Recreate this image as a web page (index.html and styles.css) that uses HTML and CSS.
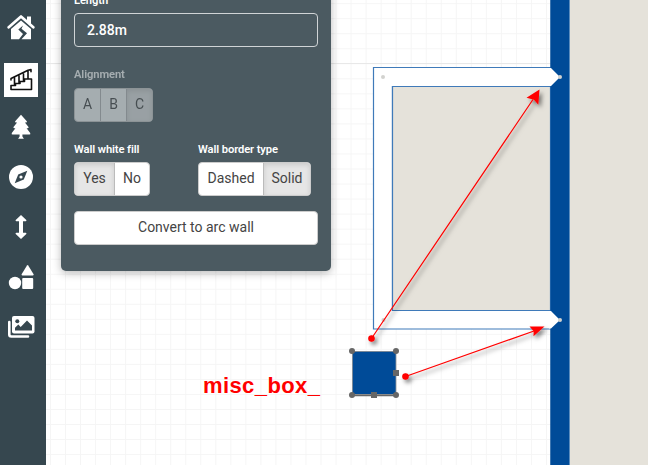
FILE: index.html
```html
<!DOCTYPE html>
<html lang="en">
<head>
<meta charset="utf-8">
<title>Floor plan editor</title>
<link rel="stylesheet" href="styles.css">
</head>
<body>
<div class="app">
  <nav class="toolbar">
    <a class="tool"><svg width="28" height="26" viewBox="0 0 28 26"><path d="M20 2.500h4v9l-4-3.500z" fill="#fff"/><path d="M1.700 13.300 14 2.500 26.300 13.300" fill="none" stroke="#fff" stroke-width="2.700" stroke-linecap="round" stroke-linejoin="round"/><path d="M14 6.400 24 15V25.300H14.500l5.500-6-5.500-4.600 1.500-3.300-4.700 4.200 4.700 4.500-4 5.200H4V15z" fill="#fff"/></svg></a>
    <a class="tool active"><svg width="34" height="34" viewBox="0 0 34 34"><path d="M7 26.500V22.500h4.500V20.500h4.500V18.500h4.500V16H27.500v10.500zM7 15.500 24 7.300l3-.7v2.200M10.500 14.500V22M15 12.500v7M19.500 10.500v7M24 8v7.500M7 15.500v1.500" fill="none" stroke="#111" stroke-width="1.600" stroke-linejoin="round" stroke-linecap="round"/></svg></a>
    <a class="tool"><svg width="20" height="26" viewBox="0 0 20 26"><path d="M10 .8 15.800 7.300q.6 1-.6 1.200h-1.300l3.600 4.500q.5 1.100-.7 1.200h-1.200l3.600 4.800q.6 1.500-.8 1.600h-7v2l1.500 2.200H7.100l1.500-2.200v-2h-7q-1.400-.1-.8-1.600L4.400 14.200H3.200q-1.200-.1-.7-1.200l3.600-4.500H4.800q-1.200-.2-.6-1.200z" fill="#fff"/></svg></a>
    <a class="tool"><svg width="26" height="26" viewBox="0 0 26 26"><circle cx="13" cy="13" r="12" fill="#fff"/><path d="m19.300 6.700-3.500 8.800-9.100 3.800 3.500-8.800z" fill="#36474f"/><circle cx="13" cy="13" r="1.600" fill="#fff"/></svg></a>
    <a class="tool"><svg width="14" height="26" viewBox="0 0 14 26"><path d="m7 1 5.300 5q.6 1-.6 1.300H9v11.400h2.700q1.200.3.600 1.300L7 25l-5.300-5q-.6-1 .6-1.300H5V7.300H2.300Q1.100 7 1.700 6z" fill="#fff"/></svg></a>
    <a class="tool"><svg width="26" height="26" viewBox="0 0 26 26"><circle cx="7" cy="19" r="6.200" fill="#fff"/><rect x="14.200" y="14" width="11" height="11" rx="1" fill="#fff"/><path d="M19 1.400q.6-.8 1.200 0l5.400 8.900q.4 1.100-.7 1.200H14.300q-1.100-.1-.7-1.200z" fill="#fff"/></svg></a>
    <a class="tool"><svg width="28" height="24" viewBox="0 0 28 24"><path d="M2.300 7v12.500q0 2 2 2H21" fill="none" stroke="#fff" stroke-width="2.600" stroke-linecap="round"/><rect x="5" y="1" width="22.500" height="17.500" rx="2" fill="#fff"/><circle cx="10.300" cy="6.200" r="2" fill="#36474f"/><path d="M8 15.500v-2.700l3.300-3.200 2.400 2.400L20 5.500l5 5v5z" fill="#36474f"/></svg></a>
  </nav>

  <main class="stage">
    <svg class="plan" width="602" height="465" viewBox="46 0 602 465">
      <defs>
        <pattern id="grid" x="50" y="3.200" width="15.030" height="15.030" patternUnits="userSpaceOnUse"><path d="M0 .5h15.030M.5 0v15.030" stroke="#f5f5f5" fill="none"/></pattern>
        <filter id="soft" x="-20%" y="-20%" width="150%" height="150%"><feDropShadow dx="2.500" dy="3" stdDeviation="2" flood-color="#000" flood-opacity=".5"/></filter>
      </defs>
      <rect x="46" width="602" height="465" fill="#fff"/>
      <rect x="46" width="602" height="465" fill="url(#grid)"/>
      <path d="M46 63.500h505" stroke="#e8e8e8"/>
      <path d="M569 0h79v465h-79z" fill="#e5e2da"/>
      <path d="M550.500 0h19v465h-19z" fill="#004b98"/>
      <path d="M569.500 0v465" stroke="#5c8dbe"/>
      <path d="M373.500 67.500H551v19H392.500V310.500H551v18.500H373.500z" fill="#fff" stroke="#3f7ab9" stroke-width="1.200"/>
      <path d="M392.500 86.500H550.500V310.500H392.500z" fill="#e5e2da" stroke="#3f7ab9" stroke-width="1.200"/>
      <path d="M550.500 0h2v465h-2z" fill="#004b98"/>
      <path d="M549 68h2l9 9-9 9h-2zM549 311h2l9 9-9 8.500h-2z" fill="#fff"/>
      <g fill="#d2d2cf"><circle cx="383" cy="77" r="2"/><circle cx="383.500" cy="320" r="2"/><circle cx="560" cy="77" r="2"/><circle cx="560" cy="320" r="2"/></g>
      <path d="M352 351h44v43h-44z" fill="#004b98"/>
      <path d="M352.500 395V351.500h43.500v43" fill="none" stroke="#999" stroke-width=".8"/>
      <path d="M352 395.300h44" stroke="#666" stroke-width="2"/>
      <g fill="#666"><circle cx="352" cy="351" r="3"/><circle cx="396" cy="351" r="3"/><circle cx="352" cy="395" r="3"/><circle cx="396" cy="395" r="3"/><path d="M393 370h6v6h-6zM371 392h6v6h-6z"/></g>
      <g fill="red" stroke="red" stroke-width="1.200" filter="url(#soft)">
        <path d="M371.500 338.500 533 99.500M405.500 376.500 534 331" fill="none"/>
        <circle cx="371.500" cy="338.500" r="2.700"/><circle cx="405.500" cy="376.500" r="2.700"/>
        <path d="m539.500 89.500-1.200 15.200-4.300-5-7.500-2zM544.500 326.500l-11 9.700.2-5-4.200-4.700z" stroke="none"/>
      </g>
    </svg>
    <div class="note">misc_box_</div>
    <section class="panel">
      <label class="caption first">Length</label>
      <div class="field">2.88m</div>
      <div class="disabled">
        <label class="caption">Alignment</label>
        <div class="group abc"><span>A</span><span>B</span><span class="on">C</span></div>
      </div>
      <div class="options">
        <div class="option">
          <label class="caption">Wall white fill</label>
          <div class="group yesno"><span class="on">Yes</span><span>No</span></div>
        </div>
        <div class="option">
          <label class="caption">Wall border type</label>
          <div class="group border"><span>Dashed</span><span class="on">Solid</span></div>
        </div>
      </div>
      <div class="convert">Convert to arc wall</div>
    </section>
  </main>
</div>
</body>
</html>
```
FILE: styles.css
```css
* { box-sizing: border-box; }
body { margin: 0; overflow: hidden; font-family: Roboto, sans-serif; }
.app { display: flex; width: 648px; height: 465px; }
.toolbar {
  width: 46px;
  padding: 2px 4px 0 0;
  background: #36474f;
  display: flex;
  flex-direction: column;
  align-items: center;
}
.tool {
  width: 34px;
  height: 50px;
  flex: none;
  display: flex;
  align-items: center;
  justify-content: center;
}
.tool.active { height: 34px; margin: 11px 0 5px; background: #fff; }
.tool svg { display: block; flex: none; }
.stage { position: relative; width: 602px; height: 465px; overflow: hidden; }
.plan { display: block; }
.note {
  position: absolute;
  left: 157px;
  top: 373px;
  font: bold 22px/26px "Liberation Sans", sans-serif;
  letter-spacing: .4px;
  color: red;
}
.panel {
  position: absolute;
  left: 15px;
  top: -10px;
  width: 270px;
  height: 281px;
  padding: 3px 13px 0;
  border-radius: 0 0 5px 5px;
  background: #4b5a61;
  box-shadow: 0 2px 9px rgba(0, 0, 0, .28);
  color: #fff;
}
.caption { display: block; height: 14px; font-size: 11.2px; line-height: 15px; font-weight: 600; letter-spacing: -.1px; white-space: nowrap; }
.field {
  height: 34px;
  margin-top: 6px;
  padding-left: 12px;
  border: 1px solid #d0d4d6;
  border-radius: 4px;
  font-size: 14px;
  line-height: 33px;
  font-weight: 500;
}
.disabled { margin-top: 20px; opacity: .5; }
.disabled .caption { font-weight: 600; font-size: 11.2px; }
.disabled .group { margin-top: 7px; }
.group {
  display: flex;
  height: 34px;
  margin-top: 6px;
  border: 1px solid #ccc;
  border-radius: 4px;
  overflow: hidden;
  background: #fff;
  color: #444;
  font-size: 14px;
  line-height: 31px;
  text-align: center;
}
.group span { flex: 1; }
.group span + span { border-left: 1px solid #bbb; }
.group .on { background: #e6e6e6; box-shadow: inset 0 2px 5px rgba(0, 0, 0, .12); }
.abc { width: 79px; }
.yesno { width: 76px; }
.yesno span:first-child { flex: 0 0 39px; }
.border { width: 113px; }
.border span:first-child { flex: 0 0 64px; }
.options { display: grid; grid-template-columns: 124px 1fr; margin-top: 20px; }
.convert {
  height: 34px;
  margin-top: 15px;
  border: 1px solid #ccc;
  border-radius: 4px;
  background: #fff;
  color: #444;
  font-size: 14px;
  line-height: 31px;
  text-align: center;
}
```
